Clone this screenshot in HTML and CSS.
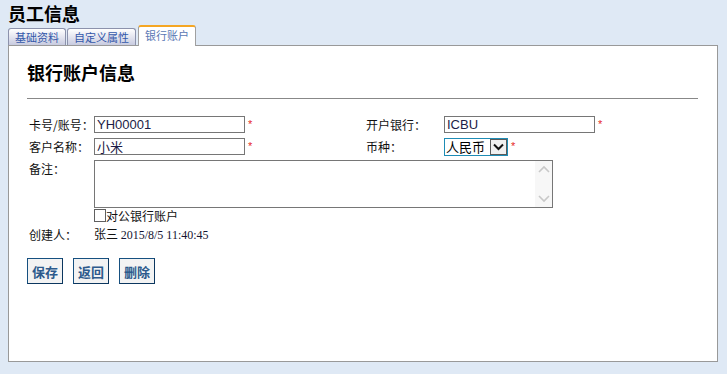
FILE: index.html
```html
<!DOCTYPE html>
<html>
  <head>
    <meta charset="UTF-8">
    <title>员工信息</title>
    <link rel="stylesheet" href="styles.css">
  </head>

  <body>
    <h1 class="page-title">员工信息</h1>

    <div class="tabs">
      <span class="tab">基础资料</span>
      <span class="tab">自定义属性</span>
      <span class="tab tab-active">银行账户</span>
    </div>

    <div class="panel">
      <h2 class="panel-title">银行账户信息</h2>
      <hr class="panel-rule">

      <div class="form">
        <div class="form-row">
          <label class="form-label" for="card-no">卡号/账号：</label>
          <div class="form-field">
            <input class="form-input" id="card-no" type="text" value="YH00001">
            <span class="required">*</span>
          </div>
          <label class="form-label form-label-wide" for="bank">开户银行：</label>
          <div class="form-field">
            <input class="form-input" id="bank" type="text" value="ICBU">
            <span class="required">*</span>
          </div>
        </div>

        <div class="form-row">
          <label class="form-label" for="customer">客户名称：</label>
          <div class="form-field">
            <input class="form-input" id="customer" type="text" value="小米">
            <span class="required">*</span>
          </div>
          <label class="form-label form-label-wide" for="currency">币种：</label>
          <div class="form-field">
            <div class="select-box">
              <select class="select" id="currency">
                <option>人民币</option>
                <option>美元</option>
              </select>
              <span class="select-arrow">
                <svg width="11" height="8" viewBox="0 0 11 8"><path d="M1 1.5 L5.5 6 L10 1.5" fill="none" stroke="#111" stroke-width="2"/></svg>
              </span>
            </div>
            <span class="required">*</span>
          </div>
        </div>

        <div class="form-row form-row-top">
          <label class="form-label" for="remark">备注：</label>
          <div class="textarea-box">
            <textarea class="form-textarea" id="remark"></textarea>
            <span class="fake-scroll">
              <svg width="12" height="8" viewBox="0 0 12 8"><path d="M1 7 L6 2 L11 7" fill="none" stroke="#c8c8c8" stroke-width="1.6"/></svg>
              <svg width="12" height="8" viewBox="0 0 12 8"><path d="M1 1 L6 6 L11 1" fill="none" stroke="#c8c8c8" stroke-width="1.6"/></svg>
            </span>
          </div>
        </div>

        <div class="form-row form-row-check">
          <span class="form-label"></span>
          <label class="check">
            <input class="check-input" type="checkbox">
            <span class="check-box"></span>对公银行账户
          </label>
        </div>

        <div class="form-row form-row-info">
          <span class="form-label">创建人：</span>
          <span class="info">张三 <span class="info-date">2015/8/5 11:40:45</span></span>
        </div>
      </div>

      <div class="actions">
        <button class="btn">保存</button>
        <button class="btn">返回</button>
        <button class="btn">删除</button>
      </div>
    </div>
  </body>
</html>
```

FILE: styles.css
```css
* {
  box-sizing: border-box;
}

body {
  margin: 0;
  padding: 2px 9px 12px 8px;
  background: rgb(223, 233, 245);
  font-family: "Noto Sans CJK SC", "Liberation Sans", sans-serif;
  font-size: 12px;
  color: #111;
}

.page-title {
  margin: 0;
  font-size: 18px;
  line-height: 22px;
  font-weight: bold;
  color: #000;
}

.tabs {
  display: flex;
  align-items: flex-end;
  gap: 1px;
  height: 21px;
}

.tab {
  height: 17px;
  padding: 0 6px;
  border: 1px solid rgb(140, 146, 172);
  border-bottom: none;
  border-radius: 3px 3px 0 0;
  background: linear-gradient(#ffffff, rgb(200, 203, 224));
  color: rgb(52, 88, 170);
  font-size: 11px;
  line-height: 16px;
}

.tab-active {
  position: relative;
  height: 21px;
  margin-left: 1px;
  margin-bottom: -1px;
  border-top: 2px solid rgb(245, 166, 35);
  border-color: rgb(245, 166, 35) rgb(160, 160, 160) transparent rgb(160, 160, 160);
  background: #fff;
  color: rgb(90, 120, 180);
  line-height: 17px;
}

.panel {
  height: 317px;
  border: 1px solid rgb(153, 153, 153);
  background: #fff;
  padding: 15px 19px 0 18px;
}

.panel-title {
  margin: 0;
  font-size: 18px;
  line-height: 22px;
  font-weight: bold;
  color: #000;
}

.panel-rule {
  margin: 15px 0 0 0;
  border: none;
  border-top: 1px solid rgb(136, 136, 136);
}

.form {
  display: flex;
  flex-direction: column;
  padding-top: 17px;
}

.form-row {
  display: flex;
  align-items: center;
  height: 17px;
  margin-bottom: 5px;
}

.form-row-top {
  align-items: flex-start;
  height: 49px;
  margin-bottom: 0;
}

.form-row-check {
  height: 14px;
  margin-bottom: 3px;
}

.form-row-info {
  height: 16px;
}

.form-label {
  width: 67px;
  flex: none;
  padding-left: 2px;
  line-height: 17px;
}

.form-label-wide {
  width: 78px;
  padding-left: 0;
}

.form-field {
  display: flex;
  align-items: center;
  width: 272px;
  flex: none;
}

.form-input {
  width: 151px;
  height: 17px;
  margin: 0;
  padding: 0 2px;
  border: 1px solid rgb(118, 118, 118);
  font-family: "Liberation Sans", Arial, "Noto Sans CJK SC", sans-serif;
  font-size: 13px;
  color: rgb(28, 28, 70);
}

.required {
  margin-left: 3px;
  color: rgb(230, 40, 40);
  font-family: "Liberation Sans", sans-serif;
  font-size: 11px;
  line-height: 11px;
  align-self: flex-start;
  padding-top: 3px;
}

.select-box {
  display: flex;
  width: 64px;
  height: 18px;
  border: 1px solid rgb(30, 140, 181);
  background: #fff;
}

.select {
  appearance: none;
  -webkit-appearance: none;
  width: 45px;
  height: 16px;
  margin: 0;
  padding: 0 0 0 1px;
  border: none;
  background: #fff;
  font-family: "Noto Sans CJK SC", sans-serif;
  font-size: 13px;
  line-height: 16px;
  color: #000;
  outline: none;
}

.select-arrow {
  display: flex;
  align-items: center;
  justify-content: center;
  width: 17px;
  height: 16px;
  border: 1px solid rgb(90, 90, 90);
  background: rgb(240, 240, 240);
}

.textarea-box {
  display: flex;
  width: 459px;
  height: 48px;
  border: 1px solid rgb(118, 118, 118);
}

.form-textarea {
  flex: 1;
  height: 46px;
  margin: 0;
  border: none;
  resize: none;
  outline: none;
}

.fake-scroll {
  display: flex;
  flex-direction: column;
  justify-content: space-between;
  align-items: center;
  width: 17px;
  padding: 4px 0 4px;
  background: rgb(247, 247, 247);
}

.check {
  display: flex;
  align-items: center;
  line-height: 14px;
}

.check-input {
  display: none;
}

.check-box {
  width: 12px;
  height: 13px;
  margin-top: -2px;
  border: 1px solid rgb(96, 96, 96);
  background: #fff;
}

.info {
  font-size: 12px;
}

.info-date {
  font-family: "Liberation Serif", "Times New Roman", serif;
  font-size: 12px;
  color: rgb(20, 20, 50);
}

.actions {
  display: flex;
  gap: 10px;
  padding-top: 11px;
}

.btn {
  width: 36px;
  height: 26px;
  margin: 0;
  padding: 0;
  border: 1px solid rgb(22, 80, 128);
  border-right-color: rgb(12, 55, 95);
  border-bottom-color: rgb(12, 55, 95);
  background: rgb(243, 243, 243);
  color: rgb(45, 90, 140);
  font-family: "Noto Sans CJK SC", sans-serif;
  font-size: 13px;
  font-weight: bold;
}
```
